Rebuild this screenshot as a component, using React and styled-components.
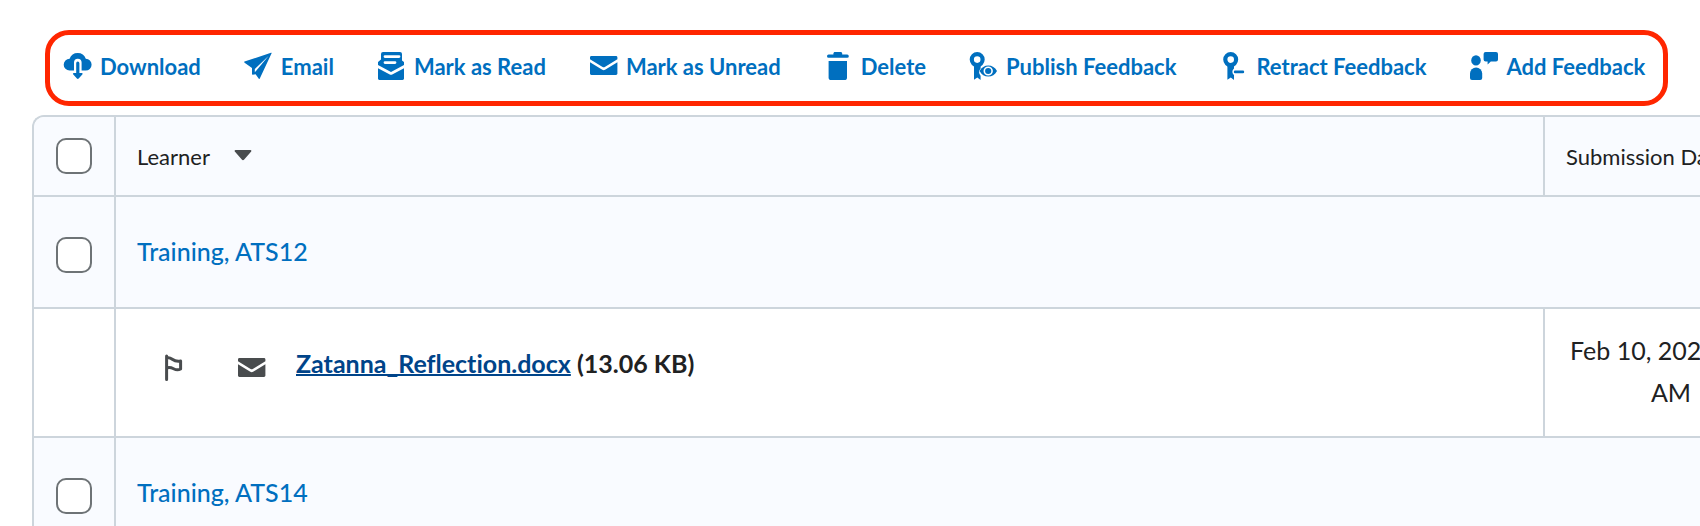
import { useState } from 'react';
import styled, { createGlobalStyle } from 'styled-components';

const GlobalStyle = createGlobalStyle`
  *, *::before, *::after {
    box-sizing: border-box;
  }

  body {
    margin: 0;
    background: #ffffff;
    color: #202122;
    font-family: Lato, 'Liberation Sans', sans-serif;
    font-variant-ligatures: none;
  }
`;

const Page = styled.main`
  height: 100vh;
  overflow: hidden;
  padding: 30px 0 0 32px;
`;

const Toolbar = styled.div`
  display: flex;
  align-items: center;
  gap: 44px;
  width: max-content;
  margin: 0 32px 9px 13px;
  padding: 17px 18px 19px 14px;
  border: 5px solid #ff2600;
  border-radius: 24px;
`;

const Icon = styled.svg.attrs({ viewBox: '0 0 28 28', 'aria-hidden': true })`
  flex: none;
  width: 28px;
  height: 28px;
  fill: currentColor;
  overflow: visible;
`;

const ToolbarButton = styled.button`
  display: inline-flex;
  align-items: center;
  gap: 8px;
  padding: 0;
  border: 0;
  background: none;
  color: #006fbf;
  font-family: inherit;
  font-size: 22px;
  font-weight: 700;
  line-height: 28px;
  white-space: nowrap;
  cursor: pointer;

  ${Icon} {
    margin-bottom: 2px;
  }
`;

const TableFrame = styled.div`
  overflow: hidden;
  border: 2px solid #cdd5dc;
  border-right: 0;
  border-top-left-radius: 12px;
`;

// The last column runs past the edge of the frame
const Table = styled.table`
  width: calc(100% + 99px);
  table-layout: fixed;
  border-collapse: separate;
  border-spacing: 0;
`;

const CheckCol = styled.col`
  width: 82px;
`;

const DateCol = styled.col`
  width: 254px;
`;

const Row = styled.tr`
  height: ${props => props.$height}px;
  background: ${props => (props.$shaded ? '#f9fbff' : '#ffffff')};
`;

const Cell = styled.td`
  padding: 0 21px 2px;
  border-bottom: 2px solid #cdd5dc;
  border-right: 2px solid #cdd5dc;
  font-size: 25px;
  line-height: 42px;
  text-align: left;
`;

const HeaderCell = styled(Cell).attrs({ as: 'th', scope: 'col' })`
  padding: 2px 21px 0;
  font-size: 22px;
  font-weight: 400;
  line-height: 28px;
  white-space: nowrap;
`;

const CheckCell = styled(Cell)`
  padding: ${props => (props.$header ? 0 : '5px')} 0 0;
  line-height: 0;
  text-align: center;
`;

const DateCell = styled(Cell)`
  padding: 0 24px 3px;
  text-align: center;
`;

const Checkbox = styled.input.attrs({ type: 'checkbox' })`
  appearance: none;
  width: 36px;
  height: 36px;
  margin: 0;
  border: 2px solid #6e7376;
  border-radius: 10px;
  background: #ffffff;
  cursor: pointer;

  &:checked {
    background: #006fbf;
    border-color: #006fbf;
  }
`;

const SortButton = styled.button`
  display: inline-flex;
  align-items: center;
  gap: 24px;
  padding: 0;
  border: 0;
  background: none;
  color: inherit;
  font: inherit;
  cursor: pointer;
`;

const SortArrow = styled.svg`
  width: 18px;
  height: 12px;
  margin-bottom: 4px;
  fill: #494c4e;
`;

const LearnerLink = styled.a`
  color: #006fbf;
  font-weight: 500;
  text-decoration: none;
`;

const Submission = styled.div`
  display: flex;
  align-items: center;
  padding: 0 0 18px 23px;
`;

const IconButton = styled.button`
  display: inline-flex;
  margin-right: ${props => props.$gap}px;
  padding: 10px 0 0;
  border: 0;
  background: none;
  color: #494c4e;
  cursor: pointer;
`;

const FileName = styled.span`
  font-weight: 700;
`;

const FileLink = styled.a`
  color: #004489;
  text-decoration: underline;
  text-decoration-thickness: 2px;
`;

const DownloadIcon = () => (
  <Icon>
    <path d="M7 18.6H5.6A5.6 5.6 0 0 1 5.6 6.8 8.6 8.6 0 0 1 21.8 6.8 5.8 5.8 0 0 1 21.6 18.6H20.6Z" />
    <path d="M10 20V10.6a3.8 3.8 0 0 1 7.6 0V20Z" fill="#fff" />
    <path d="M6.4 18.9h14.8l-7.4 8.6Z" fill="#fff" />
    <path d="M12.2 11.2a1.6 1.6 0 0 1 3.2 0V21h2.4c.9 0 1.1.8.5 1.4l-3.6 4.2c-.5.6-1.3.6-1.8 0l-3.6-4.2c-.6-.6-.4-1.4.5-1.4h2.4Z" />
  </Icon>
);

const EmailIcon = () => (
  <Icon>
    <g transform="translate(-1 0)">
      <path d="M.5 9.6 27 .7c.5-.1.8.2.6.6L15.8 26.6c-.2.5-.7.5-1 .1l-3.2-4.5-2.8.5c-.5.1-.8-.2-.8-.6V16L.6 10.7c-.6-.4-.6-.9-.1-1.1Z" />
      <path d="M10.8 20.3V17L24.5 4.1 12.6 18.2Z" fill="#fff" />
    </g>
  </Icon>
);

const ReadIcon = () => (
  <Icon>
    <g transform="translate(-1 0)">
      <path d="M4 2a2 2 0 0 1 2-2h17a2 2 0 0 1 2 2v6.4l2 1.6v2.9l-13 7.2L1 12.9V10l3-2.4Z" />
      <path d="M1 16.2 12.8 22.4a2.4 2.4 0 0 0 2.4 0L27 16.2V26.6c0 .8-.6 1.4-1.4 1.4H2.4C1.6 28 1 27.4 1 26.6Z" />
      <path
        d="M8 4.6H22M8 10.6H18"
        fill="none"
        stroke="#fff"
        strokeWidth="2.8"
        strokeLinecap="round"
      />
    </g>
  </Icon>
);

const MailIcon = () => (
  <Icon>
    <path d="M0 5.4C0 4.6.6 4 1.4 4H26c.8 0 1.4.6 1.4 1.4V7.3L14.8 15a2 2 0 0 1-2.2 0L0 7.3Z" />
    <path d="M0 10.3 12.3 17.7a2.6 2.6 0 0 0 2.800 0L27.4 10.3V21.6c0 .8-.6 1.4-1.4 1.4H1.4C.6 23 0 22.4 0 21.6Z" />
  </Icon>
);

const DeleteIcon = () => (
  <Icon>
    <g transform="translate(-1 0)">
      <path d="M9.4 2.6V1.6C9.4.7 10.1 0 11 0h5.6c.9 0 1.6.7 1.6 1.6v1h5a1.6 1.6 0 0 1 0 3.200H4.600a1.600 1.600 0 0 1 0-3.200Z" />
      <path d="M4.6 9h18.4v16.4A2.600 2.600 0 0 1 20.400 28H7.200a2.600 2.600 0 0 1-2.600-2.600Z" />
    </g>
  </Icon>
);

const PublishIcon = () => (
  <Icon>
    <g transform="translate(-1 0)">
      <circle cx="8.2" cy="7.6" r="5.4" fill="none" stroke="currentColor" strokeWidth="4.2" />
      <path d="M5 13h6.6v3.4c-2 2.500-2 5 0 7.400V28L8.300 25.400 5 27.800Z" />
      <path d="M10.6 19c2-3.600 5-5.500 8.700-5.500s6.700 1.900 8.700 5.500c-2 3.600-5 5.600-8.700 5.600s-6.700-2-8.700-5.600Z" />
      <ellipse cx="19.2" cy="19" rx="3.9" ry="3.7" fill="none" stroke="#fff" strokeWidth="1.6" />
    </g>
  </Icon>
);

const RetractIcon = () => (
  <Icon>
    <circle cx="10.7" cy="7.6" r="5.4" fill="none" stroke="currentColor" strokeWidth="4.2" />
    <path d="M7.4 13H14v3.4c-2 1.600-2.200 4.500 0 6.600V28l-3.200-2.600L7.400 27.800Z" />
    <rect x="13.8" y="18.6" width="10.4" height="2.6" rx="1.3" />
  </Icon>
);

const AddFeedbackIcon = () => (
  <Icon>
    <ellipse cx="6" cy="8.4" rx="4.8" ry="5.2" />
    <path d="M0 21.6a6 6 0 0 1 12.2 0V26a2 2 0 0 1-2 2H2a2 2 0 0 1-2-2Z" />
    <path d="M15.6 0h10.4a2 2 0 0 1 2 2v5.600a2 2 0 0 1-2 2h-5.200L17.600 12.400V9.600h-2a2 2 0 0 1-2-2V2a2 2 0 0 1 2-2Z" />
  </Icon>
);

const FlagIcon = () => (
  <Icon>
    <path
      d="M6.6 2V25.600M6.600 4C12.400 2 12 8.800 20.600 7V15C14.400 18.400 13.200 11.600 6.600 14"
      fill="none"
      stroke="currentColor"
      strokeWidth="3"
      strokeLinecap="round"
      strokeLinejoin="round"
    />
  </Icon>
);

const actions = [
  { label: 'Download', Glyph: DownloadIcon },
  { label: 'Email', Glyph: EmailIcon },
  { label: 'Mark as Read', Glyph: ReadIcon },
  { label: 'Mark as Unread', Glyph: MailIcon },
  { label: 'Delete', Glyph: DeleteIcon },
  { label: 'Publish Feedback', Glyph: PublishIcon },
  { label: 'Retract Feedback', Glyph: RetractIcon },
  { label: 'Add Feedback', Glyph: AddFeedbackIcon },
];

const learners = [
  {
    name: 'Training, ATS12',
    files: [{ name: 'Zatanna_Reflection.docx', size: '13.06 KB', date: 'Feb 10, 2025 9:35 AM' }],
  },
  { name: 'Training, ATS14', files: [] },
];

const LearnerRows = ({ learner, checked, onToggle }) => (
  <>
    <Row $height={112} $shaded>
      <CheckCell>
        <Checkbox aria-label={`Select ${learner.name}`} checked={checked} onChange={onToggle} />
      </CheckCell>
      <Cell colSpan={2}>
        <LearnerLink href="#learner">{learner.name}</LearnerLink>
      </Cell>
    </Row>
    {learner.files.map(file => (
      <Row key={file.name} $height={129}>
        <Cell />
        <Cell>
          <Submission>
            <IconButton type="button" aria-label="Flag" $gap={50}>
              <FlagIcon />
            </IconButton>
            <IconButton type="button" aria-label="Mark as read" $gap={30}>
              <MailIcon />
            </IconButton>
            <FileName>
              <FileLink href="#file">{file.name}</FileLink> ({file.size})
            </FileName>
          </Submission>
        </Cell>
        <DateCell>{file.date}</DateCell>
      </Row>
    ))}
  </>
);

const App = () => {
  const [selected, setSelected] = useState([]);
  const allSelected = selected.length === learners.length;

  const toggle = name =>
    setSelected(selected.includes(name) ? selected.filter(n => n !== name) : [...selected, name]);

  const toggleAll = () => setSelected(allSelected ? [] : learners.map(l => l.name));

  return (
    <Page>
      <GlobalStyle />
      <Toolbar role="toolbar">
        {actions.map(({ label, Glyph }) => (
          <ToolbarButton key={label} type="button">
            <Glyph />
            {label}
          </ToolbarButton>
        ))}
      </Toolbar>
      <TableFrame>
        <Table>
          <colgroup>
            <CheckCol />
            <col />
            <DateCol />
          </colgroup>
          <thead>
            <Row $height={80} $shaded>
              <CheckCell $header>
                <Checkbox aria-label="Select all" checked={allSelected} onChange={toggleAll} />
              </CheckCell>
              <HeaderCell>
                <SortButton type="button">
                  Learner
                  <SortArrow viewBox="0 0 18 12" aria-hidden="true">
                    <path d="M1.6 1h14.8c1 0 1.300 1 .6 1.700L10.200 10.600c-.7.700-1.700.7-2.400 0L1 2.700C.3 2 .6 1 1.600 1Z" />
                  </SortArrow>
                </SortButton>
              </HeaderCell>
              <HeaderCell>Submission Date</HeaderCell>
            </Row>
          </thead>
          <tbody>
            {learners.map(learner => (
              <LearnerRows
                key={learner.name}
                learner={learner}
                checked={selected.includes(learner.name)}
                onToggle={() => toggle(learner.name)}
              />
            ))}
          </tbody>
        </Table>
      </TableFrame>
    </Page>
  );
};

export default App;
